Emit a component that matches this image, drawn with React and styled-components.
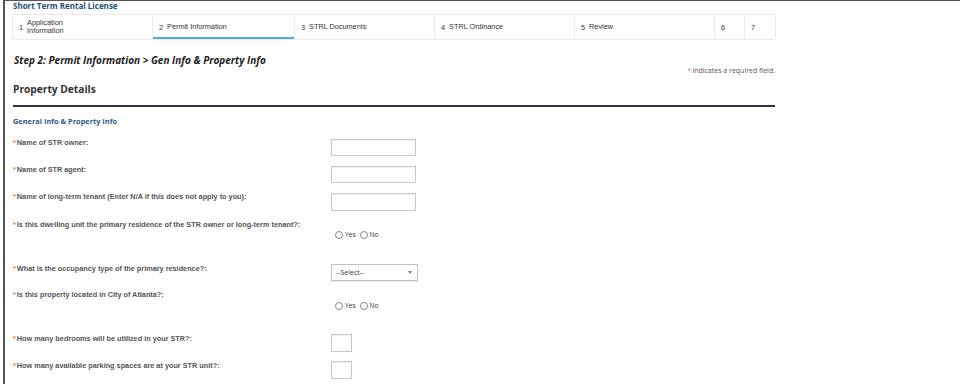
import React from "react";
import styled, { createGlobalStyle } from "styled-components";

const Global = createGlobalStyle`
  html, body { margin: 0; padding: 0; background: #fff; }
  body { font-family: "Liberation Sans", Arial, sans-serif; overflow: hidden; }
`;

const Frame = styled.div`
  margin-left: 3px;
  width: 950px;
  height: 400px;
  border-top: 1.5px solid #555;
  border-left: 2px solid #555;
  border-right: 2px solid #555;
  padding-left: 8px;
  box-sizing: content-box;
`;

const Content = styled.div`
  width: 762px;
`;

const AppTitle = styled.div`
  font-family: "Open Sans", sans-serif;
  font-weight: 700;
  font-size: 8px;
  line-height: 10px;
  color: #1f4f7f;
`;

const Stepper = styled.div`
  margin-top: 4px;
  display: flex;
  height: 24px;
  background: #fff;
  box-shadow: 0 0 2px rgba(0, 0, 0, 0.25);
`;

const Step = styled.div`
  position: relative;
  width: ${(p) => p.$w}px;
  box-sizing: border-box;
  border-right: ${(p) => (p.$last ? "none" : "1px solid #ececec")};
  display: flex;
  align-items: center;
  padding-left: 6px;
  gap: 4px;
  font-size: 7.3px;
  color: #333;
  ${(p) =>
    p.$active &&
    `&::after { content: ""; position: absolute; left: 0; right: 0; bottom: 0; height: 2px; background: #54a8dc; }`}
`;

const StepLabel = styled.span`
  line-height: 8px;
`;

const StepHeading = styled.div`
  margin-top: 14px;
  font-family: "Open Sans", sans-serif;
  font-style: italic;
  font-weight: 700;
  font-size: 10px;
  line-height: 14px;
  color: #222;
  padding-left: 1px;
`;

const RequiredNote = styled.div`
  text-align: right;
  font-family: "Open Sans", sans-serif;
  font-size: 7px;
  line-height: 8px;
  color: #555;
`;

const Star = styled.span`
  color: #e07a2f;
  margin-right: 1px;
`;

const SectionTitle = styled.div`
  margin-top: 7px;
  font-family: "Open Sans", sans-serif;
  font-weight: 700;
  font-size: 10.2px;
  line-height: 14px;
  color: #333;
`;

const Rule = styled.div`
  margin-top: 9px;
  height: 1.5px;
  background: #2b3445;
`;

const SubTitle = styled.div`
  margin-top: 9px;
  font-family: "Open Sans", sans-serif;
  font-weight: 700;
  font-size: 7.4px;
  line-height: 10px;
  color: #2a5b8c;
`;

const Form = styled.div`
  margin-top: 12px;
`;

const Row = styled.div`
  display: grid;
  grid-template-columns: 318px auto;
  height: ${(p) => p.$h}px;
`;

const Label = styled.div`
  font-size: 7.3px;
  line-height: 10px;
  font-weight: 700;
  color: #555;
  white-space: nowrap;
`;

const Control = styled.div`
  padding-top: ${(p) => p.$top}px;
  display: flex;
  align-items: flex-start;
`;

const TextInput = styled.div`
  width: ${(p) => p.$w}px;
  height: ${(p) => p.$h}px;
  box-sizing: border-box;
  border: 1px solid #c8c8c8;
  box-shadow: inset 0 1px 1px rgba(0, 0, 0, 0.06);
  background: #fff;
`;

const Radios = styled.div`
  display: flex;
  align-items: center;
  padding-left: 4px;
  gap: 2px;
  font-family: "Open Sans", sans-serif;
  font-size: 6.6px;
  line-height: 10px;
  color: #333;
`;

const Circle = styled.span`
  width: 8px;
  height: 8px;
  border: 1px solid #888;
  border-radius: 50%;
  box-sizing: border-box;
  margin-left: ${(p) => (p.$first ? 0 : 2)}px;
`;

const Select = styled.div`
  width: 87px;
  height: 17px;
  box-sizing: border-box;
  border: 1px solid #c0c0c0;
  box-shadow: 0 1px 1px rgba(0, 0, 0, 0.08);
  display: flex;
  align-items: center;
  justify-content: space-between;
  padding: 0 5px 0 4px;
  font-family: "Open Sans", sans-serif;
  font-size: 7px;
  color: #333;
`;

const Arrow = styled.span`
  width: 0;
  height: 0;
  border-left: 2.5px solid transparent;
  border-right: 2.5px solid transparent;
  border-top: 3px solid #3b8fcf;
`;

const steps = [
  { n: 1, t: "Application\nInformation", w: 140 },
  { n: 2, t: "Permit Information", w: 142, active: true },
  { n: 3, t: "STRL Documents", w: 140 },
  { n: 4, t: "STRL Ordinance", w: 140 },
  { n: 5, t: "Review", w: 140 },
  { n: 6, t: "", w: 30 },
  { n: 7, t: "", w: 30, last: true },
];

const YesNo = () => (
  <Radios>
    <Circle $first />
    <span>Yes</span>
    <Circle />
    <span>No</span>
  </Radios>
);

const rows = [
  { label: "Name of STR owner:", h: 27, top: 1, ctrl: <TextInput $w={85} $h={17} /> },
  { label: "Name of STR agent:", h: 27, top: 1, ctrl: <TextInput $w={85} $h={17} /> },
  { label: "Name of long-term tenant (Enter N/A if this does not apply to you):", h: 28, top: 1, ctrl: <TextInput $w={85} $h={18} /> },
  { label: "Is this dwelling unit the primary residence of the STR owner or long-term tenant?:", h: 44, top: 10, ctrl: <YesNo /> },
  {
    label: "What is the occupancy type of the primary residence?:",
    h: 26,
    top: 0,
    ctrl: (
      <Select>
        <span>--Select--</span>
        <Arrow />
      </Select>
    ),
  },
  { label: "Is this property located in City of Atlanta?:", h: 44, top: 11, ctrl: <YesNo /> },
  { label: "How many bedrooms will be utilized in your STR?:", h: 27, top: 0, ctrl: <TextInput $w={21} $h={18} /> },
  { label: "How many available parking spaces are at your STR unit?:", h: 27, top: 0, ctrl: <TextInput $w={21} $h={18} /> },
];

export default function App() {
  return (
    <>
      <Global />
      <Frame>
        <Content>
          <AppTitle>Short Term Rental License</AppTitle>
          <Stepper>
            {steps.map((s) => (
              <Step key={s.n} $w={s.w} $active={s.active} $last={s.last}>
                <span>{s.n}</span>
                {s.t && (
                  <StepLabel>
                    {s.t.split("\n").map((l, i) => (
                      <React.Fragment key={i}>
                        {i > 0 && <br />}
                        {l}
                      </React.Fragment>
                    ))}
                  </StepLabel>
                )}
              </Step>
            ))}
          </Stepper>
          <StepHeading>Step 2: Permit Information &gt; Gen Info &amp; Property Info</StepHeading>
          <RequiredNote>
            <Star>*</Star>indicates a required field.
          </RequiredNote>
          <SectionTitle>Property Details</SectionTitle>
          <Rule />
          <SubTitle>General Info &amp; Property Info</SubTitle>
          <Form>
            {rows.map((r, i) => (
              <Row key={i} $h={r.h}>
                <Label>
                  <Star>*</Star>
                  {r.label}
                </Label>
                <Control $top={r.top}>{r.ctrl}</Control>
              </Row>
            ))}
          </Form>
        </Content>
      </Frame>
    </>
  );
}
